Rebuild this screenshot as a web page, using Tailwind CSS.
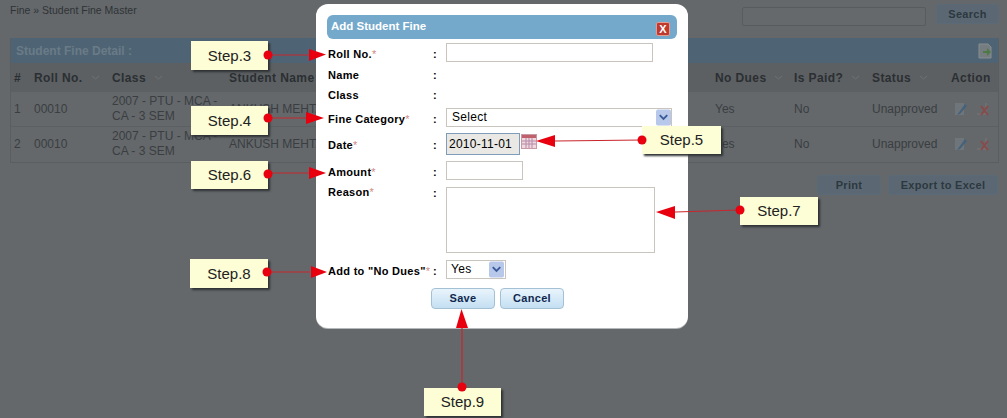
<!DOCTYPE html>
<html><head><meta charset="utf-8"><script src="https://cdn.jsdelivr.net/npm/@tailwindcss/browser@4"></script></head>
<body class="m-0 overflow-hidden">
<div class="relative w-[1007px] h-[418px] overflow-hidden bg-[#64686b] font-['Liberation_Sans',Arial,sans-serif] text-[#2e3235]">
  <!-- dimmed page -->
  <div class="flex justify-between h-[38px] pl-[10px] pr-[8px]">
    <div class="text-[10.5px] leading-[13px] pt-[4px] text-[#2f3336]">Fine » Student Fine Master</div>
    <div class="flex gap-[10px] pt-[3px] items-start">
      <div class="w-[184px] h-[19px] mt-[4px] border border-[#585c5f] rounded-[2px] bg-[#65696c]"></div>
      <div class="w-[63px] h-[20px] mt-[1px] border border-[#5a6b77] rounded-[3px] bg-[#5b6873] text-[11px] font-bold tracking-[0.3px] text-center leading-[18px] text-[#2c3840]">Search</div>
    </div>
  </div>
  <div class="ml-[10px] w-[989px] h-[125px] border border-[#5a5e61] border-t-0">
    <div class="h-[25px] bg-[#4e6474] flex items-center justify-between pl-[5px] pr-[5px]">
      <span class="text-[12px] font-bold text-[#6a7b87]">Student Fine Detail :</span>
      <svg width="16" height="16" viewBox="0 0 16 16"><path d="M2 1h9l3 3v11H2z" fill="#767d80" stroke="#868d8f"/><path d="M6 8h4V5l4 4-4 4v-3H6z" fill="#4f7a45"/></svg>
    </div>
    <div class="grid grid-cols-[20px_78px_117px_486px_79px_78px_79px_1fr] h-[29px] bg-[#5c6063] items-center text-[12px] font-bold tracking-[0.4px] text-[#2b2f32] pl-[3px]">
      <span>#</span>
      <span class="flex items-center gap-[8px]">Roll No.<svg width="9" height="5" viewBox="0 0 9 5"><path d="M1 1l3.500 3L8 1" fill="none" stroke="#6e7275"/></svg></span>
      <span class="flex items-center gap-[8px]">Class<svg width="9" height="5" viewBox="0 0 9 5"><path d="M1 1l3.500 3L8 1" fill="none" stroke="#6e7275"/></svg></span>
      <span>Student Name</span>
      <span class="flex items-center gap-[8px]">No Dues<svg width="9" height="5" viewBox="0 0 9 5"><path d="M1 1l3.500 3L8 1" fill="none" stroke="#6e7275"/></svg></span>
      <span class="flex items-center gap-[8px]">Is Paid?<svg width="9" height="5" viewBox="0 0 9 5"><path d="M1 1l3.500 3L8 1" fill="none" stroke="#6e7275"/></svg></span>
      <span class="flex items-center gap-[8px]">Status<svg width="9" height="5" viewBox="0 0 9 5"><path d="M1 1l3.500 3L8 1" fill="none" stroke="#6e7275"/></svg></span>
      <span>Action</span>
    </div>
    <div class="grid grid-cols-[20px_78px_117px_486px_79px_78px_79px_1fr] h-[35px] items-center text-[12px] leading-[15px] text-[#3a3e41] pl-[3px] border-b border-[#5c6063]">
      <span>1</span><span>00010</span><span>2007 - PTU - MCA -<br>CA - 3 SEM</span><span>ANKUSH MEHTA</span><span>Yes</span><span>No</span><span>Unapproved</span>
      <span class="flex gap-[6px] ml-[2px]">
        <svg width="16" height="16" viewBox="0 0 16 16"><path d="M2 2h9v12H2z" fill="#6e767b"/><path d="M4 14L12 3l2 2-7 8z" fill="#46627a"/></svg>
        <svg width="16" height="16" viewBox="0 0 16 16"><path d="M2 13h9V2" fill="none" stroke="#7a7478"/><path d="M6 5l7 9M13 5l-7 9" stroke="#8a4a4a" stroke-width="2"/></svg>
      </span>
    </div>
    <div class="grid grid-cols-[20px_78px_117px_486px_79px_78px_79px_1fr] h-[34px] items-center text-[12px] leading-[15px] text-[#3a3e41] pl-[3px]">
      <span>2</span><span>00010</span><span>2007 - PTU - MCA -<br>CA - 3 SEM</span><span>ANKUSH MEHTA</span><span>Yes</span><span>No</span><span>Unapproved</span>
      <span class="flex gap-[6px] ml-[2px]">
        <svg width="16" height="16" viewBox="0 0 16 16"><path d="M2 2h9v12H2z" fill="#6e767b"/><path d="M4 14L12 3l2 2-7 8z" fill="#46627a"/></svg>
        <svg width="16" height="16" viewBox="0 0 16 16"><path d="M2 13h9V2" fill="none" stroke="#7a7478"/><path d="M6 5l7 9M13 5l-7 9" stroke="#8a4a4a" stroke-width="2"/></svg>
      </span>
    </div>
  </div>
  <div class="flex justify-end gap-[7px] pr-[9px] pt-[12px] text-[11px] font-bold tracking-[0.3px] text-[#2c3840] text-center leading-[18px]">
    <div class="w-[64px] h-[20px] border border-[#5a6b77] rounded-[3px] bg-[#5b6873]">Print</div>
    <div class="w-[110px] h-[20px] border border-[#5a6b77] rounded-[3px] bg-[#5b6873]">Export to Excel</div>
  </div>

  <!-- modal -->
  <div class="absolute left-[316px] top-[4px] w-[372px] h-[324px] bg-white rounded-[12px] pt-[11px] px-[11px] shadow-[0_1px_0_#b5b8ba] text-black">
    <div class="h-[24px] w-[350px] rounded-[6px] bg-[#74a9cb] flex items-center justify-between pl-[4px] pr-[7px]">
      <span class="text-[11.5px] font-bold text-white">Add Student Fine</span>
      <span class="w-[14px] h-[14px] mt-[3px] rounded-[2px] bg-[#c0392f] border border-[#e39a92] text-white text-[11px] font-bold leading-[12px] text-center">X</span>
    </div>
    <div class="w-[350px] text-[11px] font-bold tracking-[0.3px] grid grid-cols-[105px_13px_1fr] ml-[1px] leading-[13px]">
      <div class="h-[24px] pt-[9px]">Roll No.<span class="text-[#d08a80] font-normal">*</span></div><div class="pt-[9px]">:</div>
      <div class="pt-[4px]"><input class="block w-[207px] h-[19px] border border-[#c9c4bd] bg-white"></div>

      <div class="h-[20px] pt-[6px]">Name</div><div class="pt-[6px]">:</div><div></div>
      <div class="h-[20px] pt-[6px]">Class</div><div class="pt-[6px]">:</div><div></div>

      <div class="h-[27px] pt-[10px]">Fine Category<span class="text-[#d08a80] font-normal">*</span></div><div class="pt-[10px]">:</div>
      <div class="pt-[5px]"><div class="relative w-[226px] h-[19px] border border-[#c9c4bd] flex items-center pl-[5px] font-normal text-[12px] tracking-[0.3px]">Select
        <svg class="absolute right-0 top-0" width="15" height="17" viewBox="0 0 16 17"><rect width="16" height="17" rx="2" fill="#b7c8ea"/><path d="M4 6l4 4 4-4" fill="none" stroke="#3a5a98" stroke-width="2"/></svg></div></div>

      <div class="h-[26px] pt-[9px]">Date<span class="text-[#d08a80] font-normal">*</span></div><div class="pt-[9px]">:</div>
      <div class="pt-[3px] flex items-start gap-[1px]"><div class="w-[74px] h-[22px] border border-[#7f9db9] bg-[#e9e8e4] pl-[2px] font-normal text-[12px] leading-[20px] tracking-[0.25px]">2010-11-01</div>
        <svg class="mt-[1px]" width="16" height="15" viewBox="0 0 16 15"><rect x=".5" y=".5" width="15" height="14" fill="#f1d8df" stroke="#c89aa8"/><rect x="1" y="1" width="14" height="3" fill="#c0606a"/><path d="M5 4v10M8 4v10M11 4v10M1 7h14M1 10h14" stroke="#b58aa8"/></svg></div>

      <div class="h-[27px] pt-[10px]">Amount<span class="text-[#d08a80] font-normal">*</span></div><div class="pt-[10px]">:</div>
      <div class="pt-[5px]"><input class="block w-[77px] h-[19px] border border-[#c9c4bd] bg-white"></div>

      <div class="h-[70px] pt-[3px]">Reason<span class="text-[#d08a80] font-normal">*</span></div><div class="pt-[4px]">:</div>
      <div class="pt-[4px]"><textarea class="block w-[209px] h-[66px] border border-[#c9c4bd] bg-white resize-none"></textarea></div>

      <div class="h-[27px] pt-[12px] whitespace-nowrap">Add to "No Dues"<span class="text-[#d08a80] font-normal">*</span></div><div class="pt-[12px]">:</div>
      <div class="pt-[7px]"><div class="relative w-[60px] h-[19px] border border-[#c9c4bd] flex items-center pl-[4px] font-normal text-[12px] tracking-[0.3px]">Yes
        <svg class="absolute right-[1px] top-0" width="15" height="17" viewBox="0 0 16 17"><rect width="16" height="17" rx="2" fill="#b7c8ea"/><path d="M4 6l4 4 4-4" fill="none" stroke="#3a5a98" stroke-width="2"/></svg></div></div>
    </div>
    <div class="flex gap-[5px] ml-[104px] mt-[8px] text-[11px] font-bold tracking-[0.3px] text-[#10284f] text-center leading-[19px]">
      <div class="w-[64px] h-[21px] border border-[#a3c0d4] rounded-[4px] bg-gradient-to-b from-[#e9f4fc] to-[#c4dff2]">Save</div>
      <div class="w-[64px] h-[21px] border border-[#a3c0d4] rounded-[4px] bg-gradient-to-b from-[#e9f4fc] to-[#c4dff2]">Cancel</div>
    </div>
  </div>

  <!-- callouts -->
  <div class="absolute left-[191px] top-[41px] w-[77px] h-[29px] bg-[#fdfdd6] shadow-[2px_2px_2px_#2f3234] text-[15px] leading-[29px] text-center text-[#222]">Step.3</div>
  <div class="absolute left-[191px] top-[106px] w-[77px] h-[29px] bg-[#fdfdd6] shadow-[2px_2px_2px_#2f3234] text-[15px] leading-[29px] text-center text-[#222]">Step.4</div>
  <div class="absolute left-[191px] top-[161px] w-[77px] h-[28px] bg-[#fdfdd6] shadow-[2px_2px_2px_#2f3234] text-[15px] leading-[28px] text-center text-[#222]">Step.6</div>
  <div class="absolute left-[190px] top-[259px] w-[78px] h-[29px] bg-[#fdfdd6] shadow-[2px_2px_2px_#2f3234] text-[15px] leading-[29px] text-center text-[#222]">Step.8</div>
  <div class="absolute left-[642px] top-[126px] w-[79px] h-[28px] bg-[#fdfdd6] shadow-[2px_2px_2px_#2f3234] text-[15px] leading-[28px] text-center text-[#222]">Step.5</div>
  <div class="absolute left-[740px] top-[197px] w-[78px] h-[28px] bg-[#fdfdd6] shadow-[2px_2px_2px_#2f3234] text-[15px] leading-[28px] text-center text-[#222]">Step.7</div>
  <div class="absolute left-[424px] top-[388px] w-[77px] h-[28px] bg-[#fdfdd6] shadow-[2px_2px_2px_#2f3234] text-[15px] leading-[28px] text-center text-[#222]">Step.9</div>

  <!-- arrows overlay -->
  <svg class="absolute left-0 top-0" width="1007" height="418" viewBox="0 0 1007 418">
    <g stroke="#c8262c" stroke-width="1.2" fill="none">
      <path d="M268 55H310M268 118H306M268 173H310M268 272H310M642 140L555 141M740 210L675 212M462 387V325"/>
    </g>
    <g fill="#e8000f">
      <polygon points="326,54.500 309,49 309,61"/>
      <polygon points="324,118 306,112 306,124"/>
      <polygon points="326,173 309,167 309,179"/>
      <polygon points="327,272 311,266 311,278"/>
      <polygon points="536,141 555,135 555,147"/>
      <polygon points="656,212 675,206 675,219"/>
      <polygon points="461.500,309 456,328 468,328"/>
      <circle cx="268" cy="55" r="4.500"/><circle cx="268" cy="118" r="4.500"/><circle cx="268" cy="174" r="4.500"/><circle cx="267" cy="272" r="4.500"/>
      <circle cx="642" cy="140" r="4.500"/><circle cx="740" cy="210" r="4.500"/><circle cx="462" cy="387" r="4.500"/>
    </g>
  </svg>
</div>
</body></html>
